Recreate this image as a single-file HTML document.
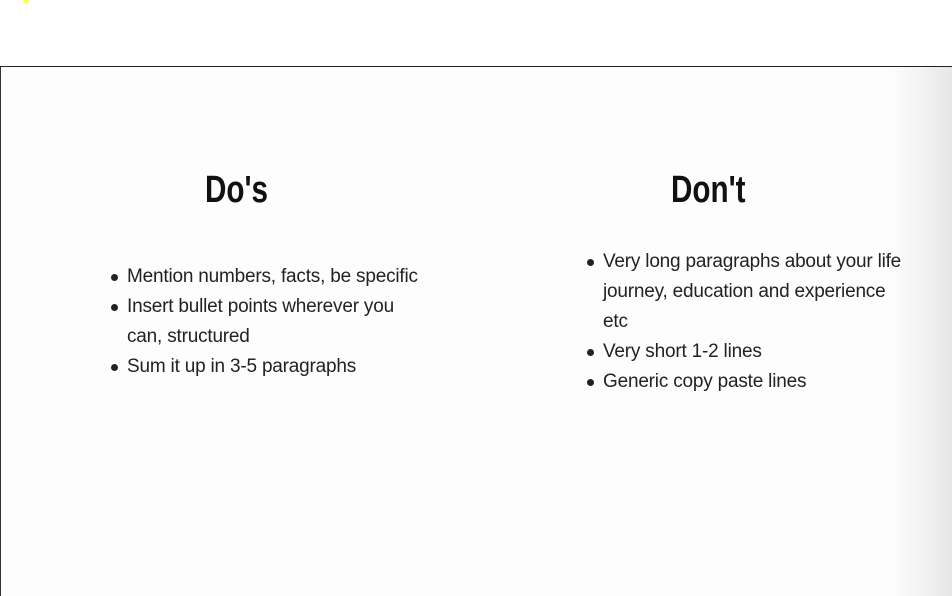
<!DOCTYPE html>
<html><head><style>
html,body{margin:0;padding:0;width:952px;height:591px;overflow:hidden;background:#fff;}
.panel{position:absolute;left:0;top:66px;width:952px;height:530px;border-top:1px solid #222;border-left:1px solid #333;box-sizing:border-box;
background:linear-gradient(to right,#fdfdfd 0,#fdfdfd 890px,#f3f3f3 920px,#e6e6e6 952px);}
h2{position:absolute;margin:0;font-family:"Liberation Sans",sans-serif;font-weight:bold;font-size:38px;color:#111;line-height:1;transform:scaleX(0.78);transform-origin:0 0;}
ul{position:absolute;margin:0;padding:0;list-style:none;font-family:"Liberation Sans",sans-serif;font-size:19px;letter-spacing:-0.2px;color:#222;line-height:30px;}
li{position:relative;padding-left:16px;}
li:before{content:"";position:absolute;left:0;top:12px;width:7px;height:7px;border-radius:50%;background:#222;}
.dot{position:absolute;left:23px;top:0;width:6px;height:4px;border-radius:0 0 3px 3px;background:#ffff66;}
</style></head><body>
<div class="dot"></div>
<div class="panel"></div>
<h2 style="left:205px;top:171px;">Do's</h2>
<h2 style="left:671px;top:171px;">Don't</h2>
<ul style="left:111px;top:262px;width:320px;">
<li>Mention numbers, facts, be specific</li>
<li>Insert bullet points wherever you can, structured</li>
<li>Sum it up in 3-5 paragraphs</li>
</ul>
<ul style="left:587px;top:247px;width:320px;">
<li>Very long paragraphs about your life journey, education and experience etc</li>
<li>Very short 1-2 lines</li>
<li>Generic copy paste lines</li>
</ul>
</body></html>
